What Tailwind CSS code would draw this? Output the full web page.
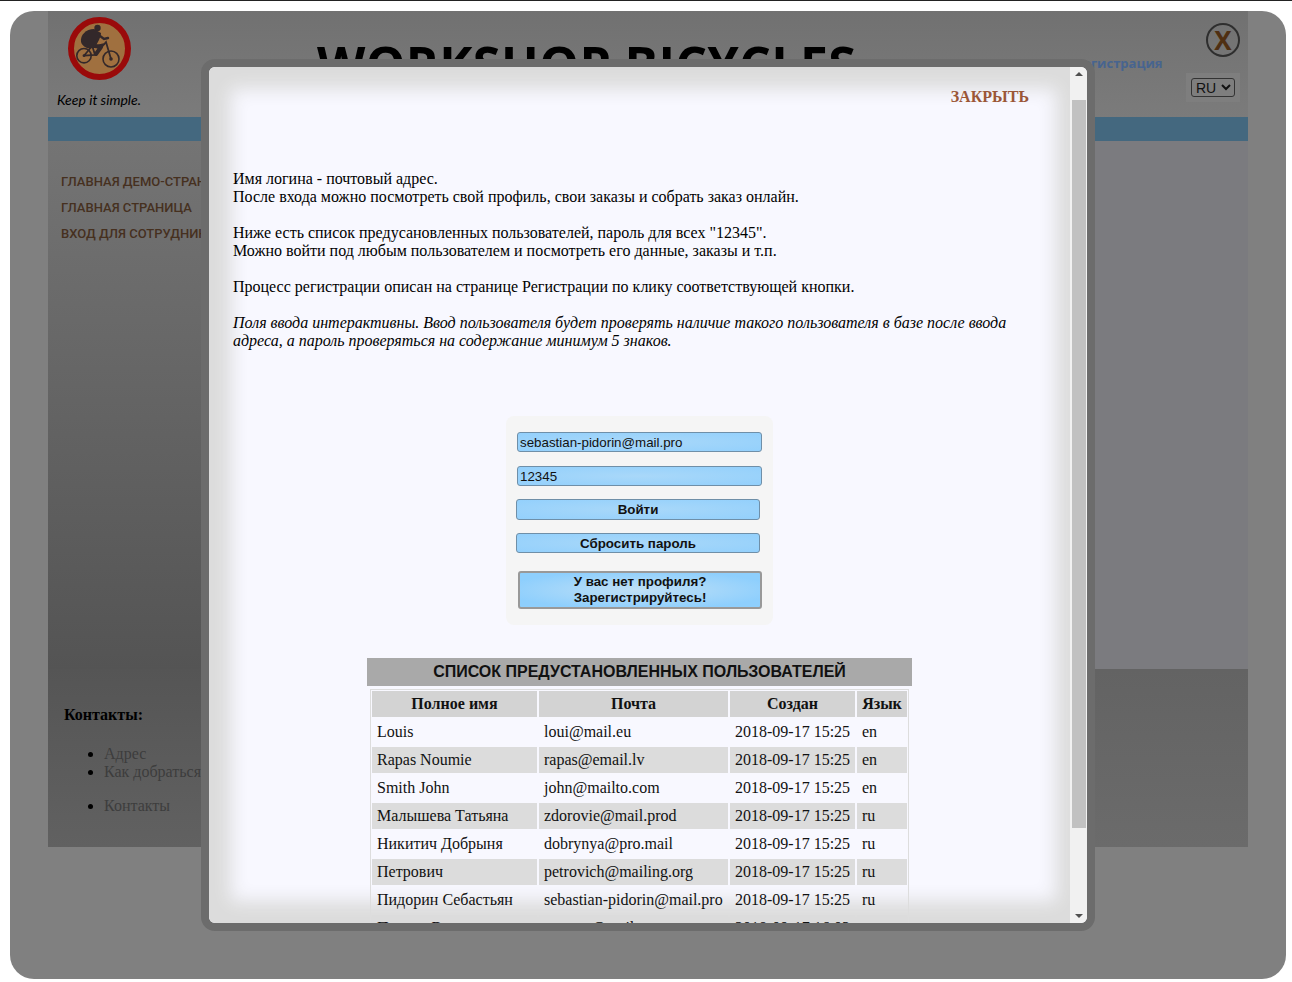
<!DOCTYPE html>
<html lang="ru">
<head>
    <meta charset="UTF-8">
    <meta name="viewport" content="width=device-width, initial-scale=1.0">
    <title>Workshop Bicycles</title>
    <script src="https://cdn.jsdelivr.net/npm/@tailwindcss/browser@4"></script>
</head>
<body class="bg-white h-[982px] overflow-hidden relative font-['Liberation_Serif',serif] text-black">
    <div class="h-px bg-[#222222]"></div>

    <!-- dimmed page -->
    <div class="mt-[10px] ml-[10px] mr-[6px] h-[968px] rounded-[24px] bg-[#808080] overflow-hidden pl-[38px]">
        <div class="w-[1200px]">
            <header class="h-[106px] bg-gradient-to-b from-[#717171] to-[#7b7b7b] relative flex">
                <div class="w-[269px] shrink-0 pl-[9px]">
                    <div class="ml-[11px] mt-[6px] w-[63px] h-[63px]">
                        <svg viewBox="0 0 63 63" class="w-[63px] h-[63px]">
                            <circle cx="31.5" cy="31.5" r="28.5" fill="#a0703f" stroke="#9a0a0a" stroke-width="6"/>
                            <g fill="none" stroke="#33282a">
                                <circle cx="16" cy="38.7" r="7.2" stroke-width="1.6"/>
                                <circle cx="43" cy="42" r="8" stroke-width="1.6"/>
                                <path d="M16 38.7 L27 38 L38 25 L43 42 M24 28 L27 38 M24 30 L37 27 M16 38.7 L24 29" stroke-width="1.8"/>
                                <path d="M21 28 L33 30 L28 37" stroke-width="4" stroke-linecap="round" stroke-linejoin="round"/>
                                <path d="M28 16 L36 22 L40 21" stroke-width="2.4" stroke-linecap="round"/>
                            </g>
                            <circle cx="43" cy="42" r="1.8" fill="#33282a"/>
                            <circle cx="16" cy="38.7" r="1.4" fill="#33282a"/>
                            <circle cx="29.5" cy="11" r="3.2" fill="#33282a"/>
                            <path d="M26 12 C18 12 12 18 13 25 C15 31 22 33 27 30 C30 25 33 20 33 16 Z" fill="#33282a"/>
                        </svg>
                    </div>
                    <p class="mt-[11px] text-[14px] leading-[18px] italic font-['Lato',sans-serif]">Keep it simple.</p>
                </div>
                <h1 class="pt-[23px] text-[50px] leading-[60px] font-bold font-['Open_Sans',sans-serif] whitespace-nowrap tracking-[0.35px]">WORKSHOP BICYCLES</h1>
                <a class="absolute left-[982px] top-[44px] text-[13px] font-bold leading-[16px] text-[#47648f] font-['Open_Sans',sans-serif] whitespace-nowrap">Вход / Регистрация</a>
                <div class="absolute left-[1138px] top-[62px] px-[5px] py-[5px] bg-[#7e7e7e]">
                    <select class="block w-[44px] h-[19px] border border-[#333333] rounded-[3px] text-[14px] leading-[17px] font-['Liberation_Sans',sans-serif] text-[#111111] bg-[#7e7e7e]">
                        <option>RU</option>
                    </select>
                </div>
                <div class="absolute left-[1158px] top-[12px] w-[34px] h-[34px] rounded-full border-2 border-[#2e2e2e] flex items-center justify-center text-[26px] leading-none font-bold text-[#4f2f12] font-['Open_Sans',sans-serif]">X</div>
            </header>
            <div class="h-[24px] bg-[#44687f]"></div>
            <div class="flex h-[528px]">
                <nav class="w-[300px] pl-[13px] pt-[31px] bg-gradient-to-b from-[#747474] to-[#545454] flex flex-col gap-[6px] text-[13px] leading-[20px] uppercase text-[#46301f] font-medium font-['Roboto',sans-serif] whitespace-nowrap">
                    <a>Главная демо-страница</a>
                    <a>Главная страница</a>
                    <a>Вход для сотрудников</a>
                </nav>
                <div class="flex-1 bg-[#7b7b7f]"></div>
            </div>
            <footer class="flex h-[178px]">
                <div class="w-[300px] bg-gradient-to-b from-[#555555] to-[#616161] pl-[16px] pt-[37px]">
                    <p class="font-bold text-[16px] leading-[18px]">Контакты:</p>
                    <ul class="list-disc ml-[40px] mt-[21px] text-[16px] leading-[18px] text-[#3d3d3d] marker:text-black whitespace-nowrap">
                        <li>Адрес</li>
                        <li>Как добраться</li>
                        <li class="mt-[16px]">Контакты</li>
                    </ul>
                </div>
                <div class="flex-1 bg-gradient-to-b from-[#636363] to-[#6b6b6b]"></div>
            </footer>
        </div>
    </div>

    <!-- modal -->
    <div class="absolute left-[201px] top-[59px] w-[894px] h-[872px] border-[8px] border-[#6c6c6c] rounded-[14px] bg-[#f8f8ff] overflow-hidden">
        <!-- edge fade sits under the scrolled content -->
        <div class="absolute left-0 top-0 w-[869px] h-[856px] pointer-events-none shadow-[inset_0_0_18px_22px_#dcdcdc]"></div>

        <div class="absolute left-0 top-0 w-[861px] h-[856px] overflow-hidden">
            <div class="h-[103px] text-right pr-[41px] pt-[18px]">
                <a class="text-[16px] leading-[20px] font-bold text-[#9b5636]">ЗАКРЫТЬ</a>
            </div>
            <p class="px-[24px] w-[830px] text-[16px] leading-[18px]">
                Имя логина - почтовый адрес.<br>
                После входа можно посмотреть свой профиль, свои заказы и собрать заказ онлайн.<br><br>
                Ниже есть список предусановленных пользователей, пароль для всех "12345".<br>
                Можно войти под любым пользователем и посмотреть его данные, заказы и т.п.<br><br>
                Процесс регистрации описан на странице Регистрации по клику соответствующей кнопки.<br><br>
                <em>Поля ввода интерактивны. Ввод пользователя будет проверять наличие такого пользователя в базе после ввода адреса, а пароль проверяться на содержание минимум 5 знаков.</em>
            </p>

            <form class="mt-[66px] mx-auto w-[267px] h-[209px] bg-[#f5f5f5] rounded-[8px] pt-[16px] flex flex-col items-start font-['Liberation_Sans',sans-serif] text-[13.33px] text-[#111111]">
                <input value="sebastian-pidorin@mail.pro" class="ml-[11px] w-[245px] h-[20px] px-[2px] border border-[#6f8fa8] rounded-[3px] bg-[radial-gradient(ellipse_at_center,#a9d8f9_0%,#93d0fc_100%)]">
                <input value="12345" class="ml-[11px] mt-[14px] w-[245px] h-[20px] px-[2px] border border-[#6f8fa8] rounded-[3px] bg-[radial-gradient(ellipse_at_center,#a9d8f9_0%,#93d0fc_100%)]">
                <button type="button" class="ml-[10px] mt-[13px] w-[244px] h-[21px] border border-[#6f8fa8] rounded-[3px] font-bold leading-[16px] bg-[radial-gradient(ellipse_at_center,#a9d8f9_0%,#93d0fc_100%)]">Войти</button>
                <button type="button" class="ml-[10px] mt-[13px] w-[244px] h-[20px] pt-px border border-[#6f8fa8] rounded-[3px] font-bold leading-[16px] bg-[radial-gradient(ellipse_at_center,#a9d8f9_0%,#93d0fc_100%)]">Сбросить пароль</button>
                <button type="button" class="ml-[12px] mt-[18px] w-[244px] h-[38px] border-2 border-[#999999] rounded-[3px] font-bold leading-[16px] bg-[radial-gradient(ellipse_at_center,#c0e0f6_0%,#8ecffd_80%)]">У вас нет профиля?<br>Зарегистрируйтесь!</button>
            </form>

            <div class="mt-[33px] mx-auto w-[545px]">
                <h2 class="h-[28px] bg-[#a9a9a9] text-center text-[16px] leading-[27px] font-bold font-['Liberation_Sans',sans-serif] text-[#111111]">СПИСОК ПРЕДУСТАНОВЛЕННЫХ ПОЛЬЗОВАТЕЛЕЙ</h2>
                <table class="mt-[3px] ml-[3px] table-fixed border-separate border-spacing-[2px] shadow-[inset_0_0_0_1px_#dddddd] w-[539px] text-[16px] leading-[18px] text-[#111111]">
                    <colgroup>
                        <col class="w-[165px]"><col class="w-[189px]"><col class="w-[125px]"><col class="w-[50px]">
                    </colgroup>
                    <thead>
                        <tr class="bg-[#d3d3d3] h-[26px]">
                            <th class="font-bold p-0">Полное имя</th>
                            <th class="font-bold p-0">Почта</th>
                            <th class="font-bold p-0">Создан</th>
                            <th class="font-bold p-0">Язык</th>
                        </tr>
                    </thead>
                    <tbody class="whitespace-nowrap">
                        <tr class="h-[26px]"><td class="px-[5px] py-0">Louis</td><td class="px-[5px] py-0">loui@mail.eu</td><td class="px-[5px] py-0">2018-09-17 15:25</td><td class="px-[5px] py-0">en</td></tr>
                        <tr class="h-[26px] bg-[#dcdcdc]"><td class="px-[5px] py-0">Rapas Noumie</td><td class="px-[5px] py-0">rapas@email.lv</td><td class="px-[5px] py-0">2018-09-17 15:25</td><td class="px-[5px] py-0">en</td></tr>
                        <tr class="h-[26px]"><td class="px-[5px] py-0">Smith John</td><td class="px-[5px] py-0">john@mailto.com</td><td class="px-[5px] py-0">2018-09-17 15:25</td><td class="px-[5px] py-0">en</td></tr>
                        <tr class="h-[26px] bg-[#dcdcdc]"><td class="px-[5px] py-0">Малышева Татьяна</td><td class="px-[5px] py-0">zdorovie@mail.prod</td><td class="px-[5px] py-0">2018-09-17 15:25</td><td class="px-[5px] py-0">ru</td></tr>
                        <tr class="h-[26px]"><td class="px-[5px] py-0">Никитич Добрыня</td><td class="px-[5px] py-0">dobrynya@pro.mail</td><td class="px-[5px] py-0">2018-09-17 15:25</td><td class="px-[5px] py-0">ru</td></tr>
                        <tr class="h-[26px] bg-[#dcdcdc]"><td class="px-[5px] py-0">Петрович</td><td class="px-[5px] py-0">petrovich@mailing.org</td><td class="px-[5px] py-0">2018-09-17 15:25</td><td class="px-[5px] py-0">ru</td></tr>
                        <tr class="h-[26px]"><td class="px-[5px] py-0">Пидорин Себастьян</td><td class="px-[5px] py-0">sebastian-pidorin@mail.pro</td><td class="px-[5px] py-0">2018-09-17 15:25</td><td class="px-[5px] py-0">ru</td></tr>
                        <tr class="h-[26px] bg-[#dcdcdc]"><td class="px-[5px] py-0">Попова Варвара</td><td class="px-[5px] py-0">popova@mail.ru</td><td class="px-[5px] py-0">2018-09-17 16:03</td><td class="px-[5px] py-0">ru</td></tr>
                    </tbody>
                </table>
            </div>
        </div>

        <!-- scrollbar -->
        <div class="absolute left-[861px] top-0 w-[17px] h-[856px] bg-[#f1f1f1]">
            <div class="mx-auto mt-[5px] w-0 h-0 border-x-[4px] border-x-transparent border-b-[4px] border-b-[#505050]"></div>
            <div class="absolute left-[2px] top-[33px] w-[14px] h-[728px] bg-[#c1c1c1]"></div>
            <div class="absolute left-[4.5px] bottom-[5px] w-0 h-0 border-x-[4px] border-x-transparent border-t-[4px] border-t-[#505050]"></div>
        </div>
    </div>
</body>
</html>
